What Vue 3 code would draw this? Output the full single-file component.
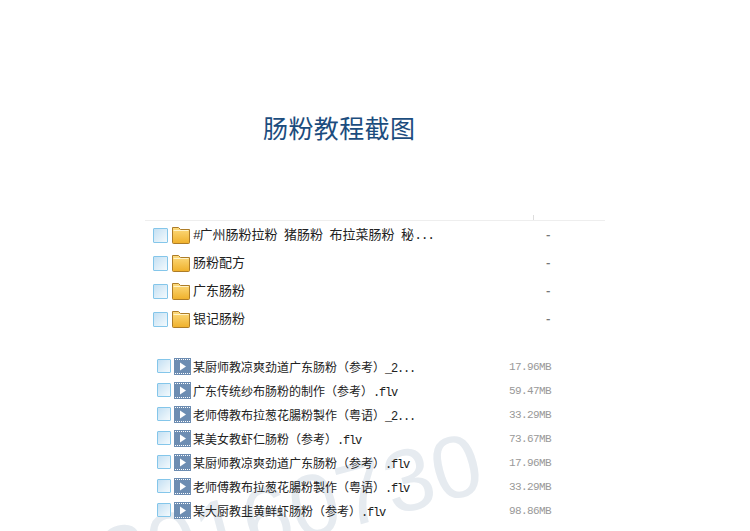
<script setup>
const folders = ['#广州肠粉拉粉 猪肠粉 布拉菜肠粉 秘...', '肠粉配方', '广东肠粉', '银记肠粉']

const files = [
  { name: '某厨师教凉爽劲道广东肠粉（参考）_2...', size: '17.96MB' },
  { name: '广东传统纱布肠粉的制作（参考）.flv', size: '59.47MB' },
  { name: '老师傅教布拉葱花腸粉製作（粤语）_2...', size: '33.29MB' },
  { name: '某美女教虾仁肠粉（参考）.flv', size: '73.67MB' },
  { name: '某厨师教凉爽劲道广东肠粉（参考）.flv', size: '17.96MB' },
  { name: '老师傅教布拉葱花腸粉製作（粤语）.flv', size: '33.29MB' },
  { name: '某大厨教韭黄鲜虾肠粉（参考）.flv', size: '98.86MB' }
]

// ascii runs get the half-width mono font
function parts(text) {
  return text.match(/[\x20-\x7e]+|[^\x20-\x7e]+/g).map((t) => ({
    text: t,
    latin: /^[\x20-\x7e]/.test(t)
  }))
}
</script>

<template>
  <div class="page">
    <div class="watermark">20160730</div>

    <h1 class="title">肠粉教程截图</h1>

    <div class="list">
      <div class="head"><i class="tick"></i></div>

      <div class="folders">
        <div v-for="(f, i) in folders" :key="i" class="row folder-row">
          <span class="check"></span>
          <svg class="folder" width="18" height="19" viewBox="0 0 18 19">
            <defs>
              <linearGradient id="fold" x1="0" y1="0" x2="0" y2="1">
                <stop offset="0" stop-color="#fddc80" />
                <stop offset="1" stop-color="#efb02a" />
              </linearGradient>
            </defs>
            <path d="M.5 1.500h6l2 2h9v13a1 1 0 0 1-1 1h-15a1 1 0 0 1-1-1z" fill="url(#fold)" stroke="#ad7c28" />
            <path d="M1.500 4.500h15" stroke="#fff3c8" />
          </svg>
          <span class="name">
            <span v-for="(p, j) in parts(f)" :key="j" :class="{ latin: p.latin }">{{ p.text }}</span>
          </span>
          <span class="dash">-</span>
        </div>
      </div>

      <div class="files">
        <div v-for="(f, i) in files" :key="i" class="row file-row">
          <span class="check small"></span>
          <svg class="video" width="17" height="17" viewBox="0 0 17 17">
            <rect width="17" height="17" fill="#6d8db2" />
            <path d="M1 1.500h15M1 15.500h15" stroke="#fff" stroke-dasharray="1 1" />
            <path d="M6 4.500l6 4-6 4z" fill="#fff" />
          </svg>
          <span class="name">
            <span v-for="(p, j) in parts(f.name)" :key="j" :class="{ latin: p.latin }">{{ p.text }}</span>
          </span>
          <span class="size">{{ f.size }}</span>
        </div>
      </div>
    </div>
  </div>
</template>

<style scoped>
.page {
  position: relative;
  height: 531px;
  overflow: hidden;
  background: #fff;
  font-family: "Noto Sans CJK SC", "Liberation Sans", sans-serif;
}

.watermark {
  position: absolute;
  left: 113px;
  top: 517px;
  font-family: "Liberation Sans", sans-serif;
  font-size: 88px;
  line-height: 1;
  color: #e6ebf0;
  transform: rotate(-15deg);
  transform-origin: left bottom;
}

.title {
  position: relative;
  margin: 0;
  padding: 109px 0 0 263px;
  height: 106px;
  font-size: 25px;
  line-height: 36px;
  font-weight: 400;
  color: #1c4d7e;
  letter-spacing: 0.4px;
}

.list {
  position: relative;
  width: 460px;
  margin-left: 145px;
}

.head {
  height: 5px;
  border-bottom: 1px solid #eeeeee;
  position: relative;
}

.tick {
  position: absolute;
  left: 388px;
  bottom: 0;
  width: 1px;
  height: 5px;
  background: #dddddd;
}

.row {
  display: flex;
  align-items: center;
  white-space: pre;
}

.folder-row {
  height: 28px;
  padding-left: 8px;
  font-size: 13px;
  color: #222;
}

.folder-row .name {
  position: relative;
  top: -2px;
}

.check {
  flex: none;
  box-sizing: border-box;
  width: 15px;
  height: 15px;
  border: 1px solid #84c6ea;
  border-radius: 1px;
  background: linear-gradient(135deg, #c4e0f3, #f4fafd);
}

.check.small {
  width: 14px;
  height: 14px;
}

.folder {
  flex: none;
  margin-left: 4px;
}

.name {
  margin-left: 3px;
  flex: 1;
}

.latin {
  font-family: "Liberation Mono", monospace;
  letter-spacing: -0.1em;
}

.dash {
  width: 59px;
  color: #777;
  font-size: 12px;
  font-weight: 700;
  position: relative;
  top: -2px;
}

.files {
  margin-top: 21px;
}

.file-row {
  height: 24px;
  padding-left: 12px;
  font-size: 12px;
  color: #222;
}

.video {
  flex: none;
  margin-left: 3px;
}

.file-row .name {
  margin-left: 2px;
  position: relative;
  top: 1px;
}

.size {
  width: 96px;
  font-family: "Liberation Mono", monospace;
  font-size: 11px;
  letter-spacing: -0.6px;
  color: #999;
  position: relative;
  top: 1px;
}
</style>
